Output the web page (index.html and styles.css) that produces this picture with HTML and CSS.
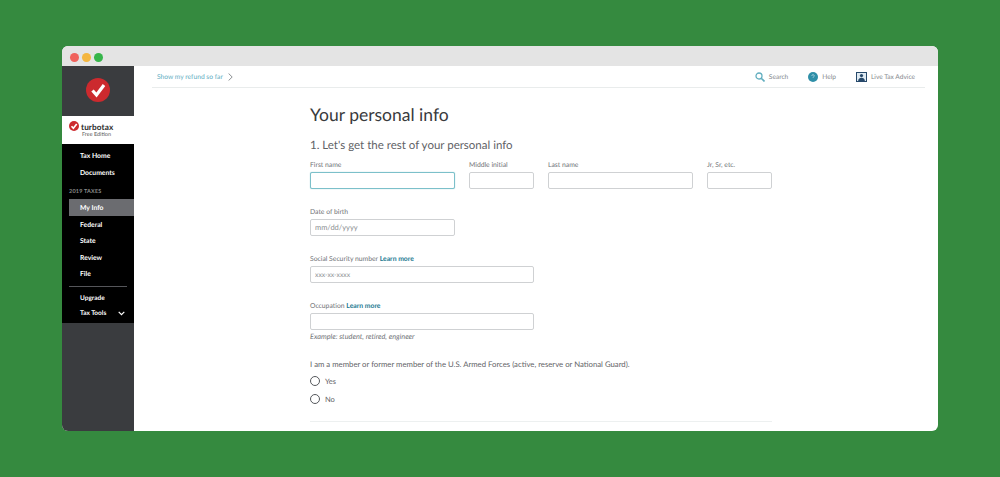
FILE: index.html
```html
<!DOCTYPE html>
<html lang="en">
<head>
    <meta charset="UTF-8">
    <title>TurboTax - Your personal info</title>
    <link rel="stylesheet" href="styles.css">
</head>
<body>
    <div class="window">
        <div class="titlebar">
            <span class="dot dot-red"></span>
            <span class="dot dot-yellow"></span>
            <span class="dot dot-green"></span>
        </div>
        <div class="app">
            <aside class="sidebar">
                <div class="side-top">
                    <svg class="big-check" width="24" height="24" viewBox="0 0 24 24">
                        <circle cx="12" cy="12" r="12" fill="#cc2a2e"/>
                        <path d="M6.5 12.5l4 4.5L18 7" fill="none" stroke="#fff" stroke-width="3.2"/>
                    </svg>
                </div>
                <div class="side-logo">
                    <svg width="10" height="10" viewBox="0 0 24 24">
                        <circle cx="12" cy="12" r="12" fill="#cc2a2e"/>
                        <path d="M6 12.5l4.5 5L18.5 7" fill="none" stroke="#fff" stroke-width="4"/>
                    </svg>
                    <div class="logo-text">
                        <div class="logo-name">turbotax</div>
                        <div class="logo-sub">Free Edition</div>
                    </div>
                </div>
                <nav class="side-nav">
                    <a class="nav-item">Tax Home</a>
                    <a class="nav-item">Documents</a>
                    <div class="nav-heading">2019 TAXES</div>
                    <a class="nav-item active">My Info</a>
                    <a class="nav-item">Federal</a>
                    <a class="nav-item">State</a>
                    <a class="nav-item">Review</a>
                    <a class="nav-item">File</a>
                    <div class="nav-line"></div>
                    <a class="nav-item small">Upgrade</a>
                    <a class="nav-item small">Tax Tools
                        <svg class="chev" width="7" height="5" viewBox="0 0 7 5"><path d="M.7.8l2.8 2.8L6.3.8" fill="none" stroke="#fff" stroke-width="1.2"/></svg>
                    </a>
                </nav>
            </aside>
            <main class="main">
                <div class="topbar">
                    <a class="refund">Show my refund so far
                        <svg width="5" height="8" viewBox="0 0 5 8"><path d="M.6.5L4.2 4 .6 7.5" fill="none" stroke="#6f7478" stroke-width=".8"/></svg>
                    </a>
                    <div class="top-links">
                        <a class="top-link">
                            <svg width="10" height="10" viewBox="0 0 10 10"><circle cx="4" cy="4" r="3" fill="none" stroke="#62aebf" stroke-width="1.3"/><path d="M6.2 6.2L9.5 9.5" stroke="#62aebf" stroke-width="1.6"/></svg>
                            Search
                        </a>
                        <a class="top-link">
                            <svg width="10" height="10" viewBox="0 0 10 10"><circle cx="5" cy="5" r="5" fill="#2f8fa8"/><path d="M3.8 3.8a1.2 1.2 0 1 1 1.6 1.2L5 5.6" fill="none" stroke="#bfe0e8" stroke-width=".8"/></svg>
                            Help
                        </a>
                        <a class="top-link">
                            <svg width="11" height="10" viewBox="0 0 11 10"><rect x=".5" y=".5" width="10" height="9" fill="#dfeaf2" stroke="#27496b"/><circle cx="5.5" cy="3.6" r="1.6" fill="#27496b"/><path d="M2 9.5c.3-3 1.7-3.7 3.5-3.7S8.7 6.5 9 9.5z" fill="#27496b"/></svg>
                            Live Tax Advice
                        </a>
                    </div>
                </div>
                <form class="form">
                    <h1>Your personal info</h1>
                    <h2>1. Let's get the rest of your personal info</h2>
                    <div class="row row-name">
                        <div class="field wide">
                            <label>First name</label>
                            <input class="input focused" type="text">
                        </div>
                        <div class="field narrow">
                            <label>Middle initial</label>
                            <input class="input" type="text">
                        </div>
                        <div class="field wide">
                            <label>Last name</label>
                            <input class="input" type="text">
                        </div>
                        <div class="field narrow">
                            <label>Jr, Sr, etc.</label>
                            <input class="input" type="text">
                        </div>
                    </div>
                    <div class="row">
                        <div class="field wide">
                            <label>Date of birth</label>
                            <input class="input" type="text" placeholder="mm/dd/yyyy">
                        </div>
                    </div>
                    <div class="row">
                        <div class="field long">
                            <label>Social Security number <a class="learn">Learn more</a></label>
                            <input class="input ssn" type="text" placeholder="xxx-xx-xxxx">
                        </div>
                    </div>
                    <div class="row">
                        <div class="field long">
                            <label>Occupation <a class="learn">Learn more</a></label>
                            <input class="input" type="text">
                            <div class="hint">Example: student, retired, engineer</div>
                        </div>
                    </div>
                    <p class="question">I am a member or former member of the U.S. Armed Forces (active, reserve or National Guard).</p>
                    <div class="radio"><span class="circle"></span>Yes</div>
                    <div class="radio"><span class="circle"></span>No</div>
                    <div class="divider"></div>
                </form>
            </main>
        </div>
    </div>
</body>
</html>
```

FILE: styles.css
```css
* {
    margin: 0;
    padding: 0;
    box-sizing: border-box;
    font-family: 'Lato', 'Open Sans', sans-serif;
    text-rendering: geometricPrecision;
}

html, body {
    height: 100%;
    overflow: hidden;
}

body {
    background: #358a3f;
    padding: 46px 62px;
}

.window {
    width: 876px;
    height: 385px;
    background: #fff;
    border-radius: 6px;
    overflow: hidden;
    display: flex;
    flex-direction: column;
}

/* Title bar */
.titlebar {
    height: 20px;
    flex: none;
    background: #e4e4e4;
    display: flex;
    align-items: center;
    gap: 3px;
    padding: 2px 0 0 8px;
}

.dot {
    width: 9px;
    height: 9px;
    border-radius: 50%;
}

.dot-red { background: #f0625c; }
.dot-yellow { background: #f4b63f; }
.dot-green { background: #36b54a; }

.app {
    flex: 1;
    display: flex;
    min-height: 0;
}

/* Sidebar */
.sidebar {
    width: 72px;
    flex: none;
    background: #3a3c3f;
    display: flex;
    flex-direction: column;
}

.side-top {
    height: 50px;
    padding-bottom: 2px;
    display: flex;
    align-items: center;
    justify-content: center;
}

.side-logo {
    height: 28px;
    background: #fff;
    display: flex;
    align-items: flex-start;
    gap: 2px;
    padding: 5px 0 0 7px;
}

.logo-text {
    padding-top: 1px;
}

.logo-name {
    font-size: 8.2px;
    font-weight: 700;
    line-height: 10px;
    color: #2b2b2b;
    letter-spacing: .1px;
}

.logo-sub {
    font-size: 5.5px;
    line-height: 7px;
    color: #555;
    padding-left: 1px;
}

.side-nav {
    background: #000;
    height: 179px;
    padding: 3px 0 0 7px;
}

.nav-item {
    display: flex;
    align-items: center;
    height: 16.5px;
    padding: 2px 0 0 11px;
    color: #fff;
    font-size: 6.8px;
    font-weight: 700;
}

.nav-item.active {
    background: #6b6c70;
}

.nav-item.small {
    font-size: 6.5px;
    height: 14.5px;
}

.nav-heading {
    color: #8b8b8b;
    font-size: 5.5px;
    font-weight: 700;
    letter-spacing: .2px;
    margin: 7px 0 2px;
    height: 10px;
    line-height: 10px;
}

.nav-line {
    height: 1px;
    background: #55565a;
    margin: 4px 7px 4px 0;
}

.chev {
    margin-left: auto;
    margin-right: 9px;
}

/* Main area */
.main {
    flex: 1;
    min-width: 0;
}

.topbar {
    height: 22px;
    margin: 0 13px 0 18px;
    padding: 0 10px 0 5px;
    border-bottom: 1px solid #e9ecec;
    display: flex;
    align-items: center;
    justify-content: space-between;
}

.refund {
    font-size: 6.7px;
    color: #62aebf;
    display: flex;
    align-items: center;
    gap: 5px;
}

.top-links {
    display: flex;
    gap: 20px;
}

.top-link {
    display: flex;
    align-items: center;
    gap: 4px;
    font-size: 6.6px;
    color: #85898d;
}

/* Form */
.form {
    padding-left: 176px;
    width: 638px;
}

h1 {
    font-size: 17.5px;
    font-weight: 400;
    line-height: 22px;
    color: #393a3d;
    margin-top: 16px;
}

h2 {
    font-size: 11.5px;
    font-weight: 400;
    line-height: 16px;
    color: #5f6266;
    margin-top: 12px;
}

.row {
    display: flex;
    gap: 14px;
    margin-top: 17px;
}

.row-name {
    margin-top: 5px;
}

.field label {
    display: block;
    height: 13px;
    line-height: 13px;
    font-size: 6.8px;
    color: #6f7276;
}

.wide { width: 145px; }
.narrow { width: 65px; }
.long { width: 224px; }

.learn {
    color: #21788f;
    font-weight: 700;
}

.input {
    display: block;
    width: 100%;
    height: 17px;
    border: 1px solid #cfd1d3;
    border-radius: 2px;
    background: #fff;
    padding: 0 4px;
    font-size: 7.5px;
}

.input::placeholder {
    color: #8d9093;
    opacity: 1;
}

.input.ssn {
    font-size: 6.8px;
}

.input.focused {
    border-color: #7cc0ca;
    box-shadow: 0 0 1px #7cc0ca;
}

.hint {
    font-size: 7.3px;
    font-style: italic;
    color: #6f7276;
    line-height: 9px;
    margin-top: 2px;
}

.question {
    font-size: 7.75px;
    line-height: 10px;
    color: #5f6266;
    margin-top: 18px;
}

.radio {
    display: flex;
    align-items: center;
    gap: 5px;
    height: 18px;
    font-size: 7.5px;
    color: #5f6266;
}

.question + .radio {
    margin-top: 3px;
}

.circle {
    width: 10px;
    height: 10px;
    border: 1px solid #55585c;
    border-radius: 50%;
}

.divider {
    height: 1px;
    background: #edf0f0;
    margin-top: 13px;
    width: 462px;
}
```
